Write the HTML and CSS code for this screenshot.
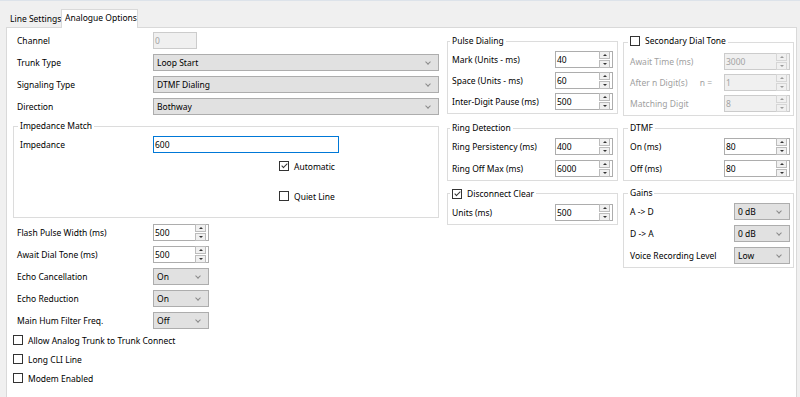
FILE: index.html
```html
<!DOCTYPE html>
<html lang="en">
<head>
  <meta charset="UTF-8">
  <title>Analogue Options</title>
  <link rel="stylesheet" href="styles.css">
</head>
<body>
  <div class="tabs">
    <div class="tab">Line Settings</div>
    <div class="tab active">Analogue Options</div>
  </div>

  <div class="panel">
    <!-- left column -->
    <div class="col-left">
      <div class="rows top-rows">
        <div class="row"><span class="lbl">Channel</span><span class="field off w-chan">0</span></div>
        <div class="row"><span class="lbl">Trunk Type</span><span class="select w-wide">Loop Start</span></div>
        <div class="row"><span class="lbl">Signaling Type</span><span class="select w-wide">DTMF Dialing</span></div>
        <div class="row"><span class="lbl">Direction</span><span class="select w-wide">Bothway</span></div>
      </div>

      <fieldset class="group imp">
        <legend>Impedance Match</legend>
        <div class="row"><span class="lbl lbl-in">Impedance</span><span class="field focus w-imp">600</span></div>
        <div class="imp-checks">
          <div class="check"><span class="box checked"></span>Automatic</div>
          <div class="check"><span class="box"></span>Quiet Line</div>
        </div>
      </fieldset>

      <div class="rows low-rows">
        <div class="row"><span class="lbl">Flash Pulse Width (ms)</span><span class="field spin w-small">500<span class="spin-btns"><i class="up"></i><i class="dn"></i></span></span></div>
        <div class="row"><span class="lbl">Await Dial Tone (ms)</span><span class="field spin w-small">500<span class="spin-btns"><i class="up"></i><i class="dn"></i></span></span></div>
        <div class="row"><span class="lbl">Echo Cancellation</span><span class="select w-small">On</span></div>
        <div class="row"><span class="lbl">Echo Reduction</span><span class="select w-small">On</span></div>
        <div class="row"><span class="lbl">Main Hum Filter Freq.</span><span class="select w-small">Off</span></div>
      </div>

      <div class="checks">
        <div class="check"><span class="box"></span>Allow Analog Trunk to Trunk Connect</div>
        <div class="check"><span class="box"></span>Long CLI Line</div>
        <div class="check"><span class="box"></span>Modem Enabled</div>
      </div>
    </div>

    <!-- right side groups -->
    <div class="groups">
      <fieldset class="group mid tight">
        <legend>Pulse Dialing</legend>
        <div class="row"><span class="lbl">Mark (Units - ms)</span><span class="field spin w-mid">40<span class="spin-btns"><i class="up"></i><i class="dn"></i></span></span></div>
        <div class="row"><span class="lbl">Space (Units - ms)</span><span class="field spin w-mid">60<span class="spin-btns"><i class="up"></i><i class="dn"></i></span></span></div>
        <div class="row"><span class="lbl">Inter-Digit Pause (ms)</span><span class="field spin w-mid">500<span class="spin-btns"><i class="up"></i><i class="dn"></i></span></span></div>
      </fieldset>

      <fieldset class="group side tight disabled">
        <legend><span class="legend-check"><span class="box"></span>Secondary Dial Tone</span></legend>
        <div class="row"><span class="lbl">Await Time (ms)</span><span class="field spin off w-side">3000<span class="spin-btns"><i class="up"></i><i class="dn"></i></span></span></div>
        <div class="row"><span class="lbl split"><span>After n Digit(s)</span><span class="neq">n =</span></span><span class="field spin off w-side">1<span class="spin-btns"><i class="up"></i><i class="dn"></i></span></span></div>
        <div class="row"><span class="lbl">Matching Digit</span><span class="field spin off w-side">8<span class="spin-btns"><i class="up"></i><i class="dn"></i></span></span></div>
      </fieldset>

      <fieldset class="group mid">
        <legend>Ring Detection</legend>
        <div class="row"><span class="lbl">Ring Persistency (ms)</span><span class="field spin w-mid">400<span class="spin-btns"><i class="up"></i><i class="dn"></i></span></span></div>
        <div class="row"><span class="lbl">Ring Off Max (ms)</span><span class="field spin w-mid">6000<span class="spin-btns"><i class="up"></i><i class="dn"></i></span></span></div>
      </fieldset>

      <fieldset class="group side">
        <legend>DTMF</legend>
        <div class="row"><span class="lbl">On (ms)</span><span class="field spin w-side">80<span class="spin-btns"><i class="up"></i><i class="dn"></i></span></span></div>
        <div class="row"><span class="lbl">Off (ms)</span><span class="field spin w-side">80<span class="spin-btns"><i class="up"></i><i class="dn"></i></span></span></div>
      </fieldset>

      <fieldset class="group mid">
        <legend><span class="legend-check"><span class="box checked"></span>Disconnect Clear</span></legend>
        <div class="row"><span class="lbl">Units (ms)</span><span class="field spin w-mid">500<span class="spin-btns"><i class="up"></i><i class="dn"></i></span></span></div>
      </fieldset>

      <fieldset class="group side gains">
        <legend>Gains</legend>
        <div class="row"><span class="lbl">A -&gt; D</span><span class="select w-gain">0 dB</span></div>
        <div class="row"><span class="lbl">D -&gt; A</span><span class="select w-gain">0 dB</span></div>
        <div class="row"><span class="lbl">Voice Recording Level</span><span class="select w-gain">Low</span></div>
      </fieldset>
    </div>
  </div>
</body>
</html>
```

FILE: styles.css
```css
html, body {
  margin: 0;
  padding: 0;
  height: 100%;
  overflow: hidden;
}

body {
  background: #f0f0f0;
  font-family: "Noto Sans", "Segoe UI", sans-serif;
  font-size: 8.5px;
  color: #000;
}

/* tab strip */
.tabs {
  display: flex;
  align-items: flex-end;
  height: 27px;
  padding-left: 7px;
  border-top: 1px solid #dde3ea;
  box-sizing: border-box;
}

.tab {
  width: 54px;
  height: 15px;
  line-height: 14px;
  padding-left: 3px;
  box-sizing: border-box;
  white-space: nowrap;
}

.tab.active {
  width: 77px;
  height: 19px;
  line-height: 16px;
  padding-left: 3px;
  background: #fff;
  border: 1px solid #d9d9d9;
  border-bottom: none;
  margin-bottom: -1px;
  position: relative;
  z-index: 1;
}

/* page */
.panel {
  display: flex;
  gap: 8px;
  height: 380px;
  margin: 0 3px 0 6px;
  padding: 4px 0 0 6px;
  background: #fff;
  border: 1px solid #d9d9d9;
}

.col-left {
  width: 426px;
  display: flex;
  flex-direction: column;
}

.rows {
  display: flex;
  flex-direction: column;
  gap: 5px;
}

.low-rows {
  margin-top: 6px;
}

.row {
  display: flex;
  align-items: center;
  height: 17px;
  white-space: nowrap;
}

.lbl {
  flex: 0 0 140px;
  padding-left: 4px;
  box-sizing: border-box;
}

.lbl-in {
  flex-basis: 133px;
  padding-left: 0;
}

/* controls */
.field,
.select {
  display: flex;
  align-items: center;
  height: 17px;
  box-sizing: border-box;
  border: 1px solid #adadad;
  background: #fff;
  padding-left: 1px;
}

.field.off {
  background: #f0f0f0;
  border-color: #cccccc;
  color: #a3a3a3;
}

.field.focus {
  border-color: #0078d7;
}

.select {
  background: #e1e1e1;
  padding-left: 3px;
}

.select::after {
  content: "";
  width: 3px;
  height: 3px;
  margin: -2px 8px 0 auto;
  border-right: 1px solid #8a8a8a;
  border-bottom: 1px solid #8a8a8a;
  transform: rotate(45deg);
}

.spin-btns {
  display: flex;
  flex-direction: column;
  gap: 1px;
  margin: 0 2px 0 auto;
}

.spin-btns i {
  display: flex;
  align-items: center;
  justify-content: center;
  width: 9px;
  height: 6px;
  border: 1px solid #bcbcbc;
  background: #f0f0f0;
}

.spin-btns i::after {
  content: "";
  border-left: 2px solid transparent;
  border-right: 2px solid transparent;
}

.spin-btns .up::after { border-bottom: 2px solid #333; }
.spin-btns .dn::after { border-top: 2px solid #333; }

.off .spin-btns i { border-color: #d6d6d6; }
.off .spin-btns .up::after { border-bottom-color: #9a9a9a; }
.off .spin-btns .dn::after { border-top-color: #9a9a9a; }

.w-chan { width: 44px; }
.w-wide { width: 286px; }
.w-imp { width: 186px; }
.w-small { width: 56px; }
.w-mid { width: 58px; }
.w-side { width: 66px; }
.w-gain { width: 56px; }

/* checkboxes */
.box {
  display: inline-flex;
  align-items: center;
  justify-content: center;
  width: 8px;
  height: 8px;
  border: 1px solid #333;
  background: #fff;
  flex: none;
}

.box.checked::after {
  content: "";
  width: 2px;
  height: 5px;
  margin-top: -2px;
  border-right: 1px solid #333;
  border-bottom: 1px solid #333;
  transform: rotate(45deg);
}

.check {
  display: flex;
  align-items: center;
  gap: 5px;
  height: 14px;
  white-space: nowrap;
}

.checks {
  display: flex;
  flex-direction: column;
  gap: 5px;
  margin-top: 4px;
}

/* group boxes */
.group {
  margin: 0;
  min-width: 0;
  border: 1px solid #dcdcdc;
  padding: 4px 4px 3px 4px;
  box-sizing: border-box;
  display: flex;
  flex-direction: column;
  gap: 5px;
}

.group legend {
  padding: 0 2px;
  margin-left: -2px;
  line-height: 12px;
}

.legend-check {
  display: inline-flex;
  align-items: center;
  gap: 5px;
}

.imp {
  margin-top: 5px;
  padding: 4px 6px 15px 6px;
  gap: 0;
}

.imp-checks {
  display: flex;
  flex-direction: column;
  gap: 18px;
  margin-top: 7px;
  padding-left: 259px;
}

.imp-checks .check {
  height: 12px;
}

.groups {
  display: grid;
  grid-template-columns: 171px 171px;
  column-gap: 5px;
  row-gap: 6px;
  align-items: start;
  margin-top: 3px;
  align-self: flex-start;
}

.group.tight {
  gap: 4px;
}

.group.mid .lbl {
  flex-basis: 103px;
  padding-left: 0;
}

.group.side {
  padding-left: 6px;
  padding-right: 3px;
}

.group.side .lbl {
  flex-basis: 94px;
  padding-left: 0;
}

.group.gains .lbl {
  flex-basis: 104px;
}

.group.disabled .lbl {
  color: #a0a0a0;
}

.split {
  display: flex;
}

.neq {
  margin-left: auto;
  margin-right: 12px;
}
```
